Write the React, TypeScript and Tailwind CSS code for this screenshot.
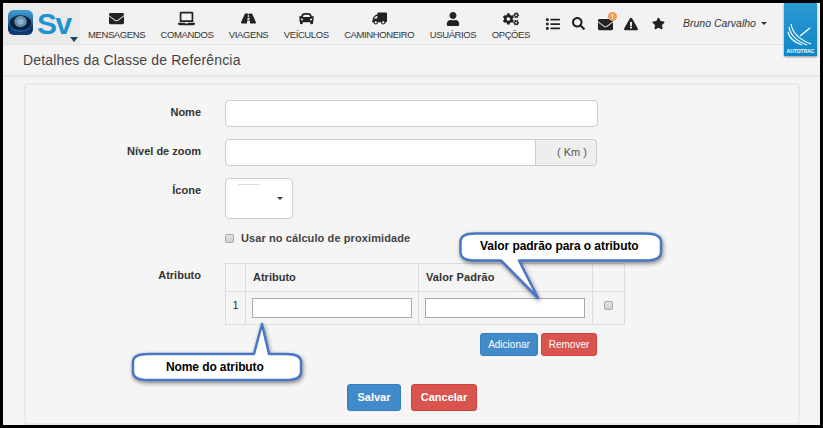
import React from "react";
import { FaEnvelope, FaLaptop, FaRoad, FaCar, FaTruck, FaUser, FaCogs, FaList, FaSearch, FaExclamationTriangle, FaStar } from "react-icons/fa";

const nav = [
  { label: "MENSAGENS", icon: <FaEnvelope size={15} /> },
  { label: "COMANDOS", icon: <FaLaptop size={17} /> },
  { label: "VIAGENS", icon: <FaRoad size={15} /> },
  { label: "VEÍCULOS", icon: <FaCar size={15} /> },
  { label: "CAMINHONEIRO", icon: <FaTruck size={15} className="-scale-x-100" /> },
  { label: "USUÁRIOS", icon: <FaUser size={14} /> },
  { label: "OPÇÕES", icon: <FaCogs size={16} /> },
];

function Logo() {
  return (
    <div className="relative w-[77px] h-[41px] bg-[#eaeaea] shrink-0 flex items-start pl-[5px] pt-[7px] gap-[4px]">
      <svg width="25" height="25" viewBox="0 0 28 26" preserveAspectRatio="none" className="shrink-0">
        <defs>
          <linearGradient id="tile" x1="0" y1="0" x2="0" y2="1">
            <stop offset="0" stopColor="#3f9fd6" />
            <stop offset="0.45" stopColor="#2a6f9f" />
            <stop offset="0.75" stopColor="#0c2f5c" />
            <stop offset="1" stopColor="#0f3f7a" />
          </linearGradient>
        </defs>
        <rect x="0" y="0" width="28" height="26" rx="6" fill="url(#tile)" />
        <ellipse cx="14" cy="13" rx="12" ry="7.5" fill="#0a1f3c" />
        <ellipse cx="14" cy="12" rx="7" ry="6" fill="#5f8fab" />
        <ellipse cx="14" cy="12" rx="3.5" ry="3" fill="#8fb4c8" />
        <path d="M3 19 Q14 25 25 19" stroke="#1c5f9a" strokeWidth="1.5" fill="none" />
      </svg>
      <span className="font-['Liberation_Sans',sans-serif] font-bold text-[30px] leading-[28px] tracking-[-1.5px] text-[#1d94d0]">Sv</span>
      <span className="absolute right-[2px] bottom-[2px] w-0 h-0 border-l-[4px] border-r-[4px] border-t-[5px] border-l-transparent border-r-transparent border-t-[#1f3f66]" />
    </div>
  );
}

function Autotrac() {
  return (
    <div className="absolute left-[784px] top-[3px] w-[33px] h-[53px] bg-gradient-to-b from-[#2a9ad2] to-[#0a86c8] shadow-[0_1px_2px_rgba(0,0,0,0.4)] flex flex-col items-center justify-end pb-[2px]">
      <svg width="27" height="24" viewBox="0 0 27 24" fill="none" stroke="#fff" className="mb-[1px]">
        <path d="M4 1 Q6 14 24 21" strokeWidth="1.2" />
        <path d="M2 4 Q4 16 20 22" strokeWidth="1.2" />
        <path d="M1 9 Q3 18 15 22" strokeWidth="1.2" />
        <path d="M13 13 L23 5" strokeWidth="1.4" />
      </svg>
      <span className="font-['Liberation_Sans',sans-serif] font-bold text-[5px] leading-[6px] text-white">AUTOTRAC</span>
    </div>
  );
}

function Box({ className = "" }: { className?: string }) {
  return <input className={`bg-white border border-[#ccc] rounded-[4px] outline-none ${className}`} />;
}

function Check({ className = "" }: { className?: string }) {
  return <span className={`block w-[9px] h-[9px] rounded-[2px] border border-[#a8a8a8] bg-gradient-to-b from-[#e4e4e4] to-[#cfcfcf] ${className}`} />;
}

function Row({ label, children, className = "" }: { label: string; children: React.ReactNode; className?: string }) {
  return (
    <div className={`flex ${className}`}>
      <label className="w-[175px] shrink-0 text-right font-bold text-[11px] leading-[17px] text-[#333] pt-[4px]">{label}</label>
      <div className="ml-[24px]">{children}</div>
    </div>
  );
}

export default function App() {
  return (
    <div className="relative w-[823px] h-[428px] overflow-hidden bg-black p-[3px] font-['Liberation_Sans',Arial,sans-serif] text-[#333]">
      <div className="w-full h-full bg-[#f4f4f4] overflow-hidden flex flex-col">
        <header className="h-[42px] shrink-0 flex bg-[#f2f2f2] border-b border-[#e4e4e4]">
          <Logo />
          <nav className="flex ml-[8px] gap-[15.5px]">
            {nav.map((n) => (
              <div key={n.label} className="flex flex-col items-center pt-[7px] text-[#222]">
                <div className="h-[17px] flex items-center">{n.icon}</div>
                <span className="text-[9.5px] leading-[12px] text-[#333] mt-[2px] tracking-[-0.4px]">{n.label}</span>
              </div>
            ))}
          </nav>
          <div className="flex items-start pt-[14px] ml-[16px] text-[#222]">
            <FaList size={14} />
            <FaSearch size={13} className="ml-[12px]" />
            <span className="relative ml-[13px]">
              <FaEnvelope size={15} />
              <span className="absolute -right-[4px] -top-[5px] w-[9px] h-[9px] rounded-full bg-[#ee9a5a] text-white text-[7px] leading-[9px] text-center font-bold">!</span>
            </span>
            <FaExclamationTriangle size={14} className="ml-[11px]" />
            <FaStar size={13} className="ml-[14px]" />
            <span className="ml-[18px] italic text-[10.5px] leading-[13px] text-[#333] whitespace-nowrap">Bruno Carvalho</span>
            <span className="ml-[5px] mt-[5px] w-0 h-0 border-l-[3px] border-r-[3px] border-t-[3px] border-l-transparent border-r-transparent border-t-[#333]" />
          </div>
        </header>
        <div className="h-[32px] shrink-0 border-b-2 border-[#e6e6e6] pl-[20px] pt-[6px] text-[14px] leading-[18px] tracking-[0.16px] text-[#444]">
          Detalhes da Classe de Referência
        </div>
        <main className="ml-[21px] mr-[20px] mt-[6px] grow border-2 border-[#e9e9e9] rounded-[4px] bg-[#f5f5f5] pt-[15px]">
          <Row label="Nome"><Box className="block w-[373px] h-[27px]" /></Row>
          <Row label="Nível de zoom" className="mt-[12px]">
            <div className="flex h-[27px] w-[372px]">
              <Box className="w-[311px] h-full rounded-r-none" />
              <span className="grow border border-l-0 border-[#ccc] rounded-r-[4px] bg-[#eee] text-[11px] leading-[25px] text-right pr-[9px] text-[#555]">( Km )</span>
            </div>
          </Row>
          <Row label="Ícone" className="mt-[12px]">
            <div className="relative w-[68px] h-[41px] bg-white border border-[#ccc] rounded-[4px]">
              <span className="absolute left-[12px] top-[5px] w-[22px] h-px bg-[#ddd]" />
              <span className="absolute right-[9px] top-[18px] w-0 h-0 border-l-[3px] border-r-[3px] border-t-[3px] border-l-transparent border-r-transparent border-t-[#333]" />
            </div>
          </Row>
          <div className="flex items-center ml-[199px] mt-[11px] h-[16px]">
            <Check />
            <span className="ml-[7px] font-bold text-[11px] tracking-[0.1px] text-[#444]">Usar no cálculo de proximidade</span>
          </div>
          <Row label="Atributo" className="mt-[17px]">
            <table className="border-collapse text-[11px]">
              <thead>
                <tr className="h-[28px]">
                  <th className="w-[20px] border border-[#ddd] p-0" />
                  <th className="w-[173px] border border-[#ddd] p-0 pl-[7px] text-left font-bold">Atributo</th>
                  <th className="w-[174px] border border-[#ddd] p-0 pl-[7px] text-left font-bold tracking-[0.1px]">Valor Padrão</th>
                  <th className="w-[32px] border border-[#ddd] p-0" />
                </tr>
              </thead>
              <tbody>
                <tr className="h-[33px]">
                  <td className="border border-[#ddd] p-0 text-[11px] text-center align-top pt-[5px]">1</td>
                  <td className="border border-[#ddd] p-0 pl-[6px]"><input className="block w-[160px] h-[20px] bg-white border border-[#a9a9a9] outline-none" /></td>
                  <td className="border border-[#ddd] p-0 pl-[6px]"><input className="block w-[160px] h-[20px] bg-white border border-[#a9a9a9] outline-none" /></td>
                  <td className="border border-[#ddd] p-0 align-top pt-[9px]"><Check className="mx-auto" /></td>
                </tr>
              </tbody>
            </table>
            <div className="flex justify-end gap-[3px] mt-[8px] w-[372px]">
              <button className="w-[58px] h-[23px] rounded-[3px] bg-[#428bca] border border-[#357ebd] text-white text-[10px]">Adicionar</button>
              <button className="w-[56px] h-[23px] rounded-[3px] bg-[#d9534f] border border-[#d43f3a] text-white text-[10px]">Remover</button>
            </div>
          </Row>
          <div className="flex ml-[321px] mt-[28px] gap-[10px]">
            <button className="w-[54px] h-[27px] rounded-[3px] bg-[#428bca] border border-[#357ebd] text-white font-bold text-[11px]">Salvar</button>
            <button className="w-[66px] h-[27px] rounded-[3px] bg-[#d9534f] border border-[#d43f3a] text-white font-bold text-[11px]">Cancelar</button>
          </div>
        </main>
      </div>

      <Autotrac />

      <div className="absolute left-[455px] top-[229px] w-[212px] h-[74px]">
        <svg width="212" height="74" viewBox="0 0 212 74" className="absolute inset-0 drop-shadow-[1px_2px_2px_rgba(0,0,0,0.45)]">
          <path d="M20 4.5 H190 Q206 4.5 206 13 V23 Q206 31.5 190 31.5 H64 L83 69 L46 31.5 H20 Q5.5 31.5 5.5 23 V13 Q5.5 4.5 20 4.5 Z" fill="#fff" stroke="#4a76c6" strokeWidth="2.5" strokeLinejoin="round" />
        </svg>
        <span className="absolute left-[25px] top-[8px] text-[12px] leading-[18px] tracking-[-0.05px] font-bold text-black whitespace-nowrap">Valor padrão para o atributo</span>
      </div>

      <div className="absolute left-[128px] top-[320px] w-[180px] h-[66px]">
        <svg width="180" height="66" viewBox="0 0 180 66" className="absolute inset-0 drop-shadow-[1px_2px_2px_rgba(0,0,0,0.45)]">
          <path d="M20 34 H126 L134 4 L141 34 H158 Q173 34 173 42 V52 Q173 60 158 60 H20 Q5 60 5 52 V42 Q5 34 20 34 Z" fill="#fff" stroke="#4a76c6" strokeWidth="2.5" strokeLinejoin="round" />
        </svg>
        <span className="absolute left-[38px] top-[38px] text-[12px] leading-[18px] tracking-[-0.1px] font-bold text-black whitespace-nowrap">Nome do atributo</span>
      </div>
    </div>
  );
}
